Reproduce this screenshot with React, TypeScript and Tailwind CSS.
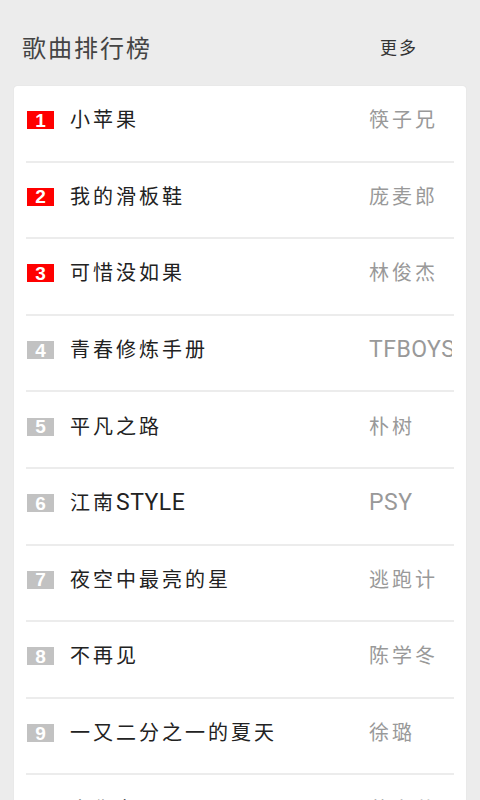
const songs = [
  { title: "小苹果", artist: "筷子兄" },
  { title: "我的滑板鞋", artist: "庞麦郎" },
  { title: "可惜没如果", artist: "林俊杰" },
  { title: "青春修炼手册", artist: "TFBOYS" },
  { title: "平凡之路", artist: "朴树" },
  { title: "江南STYLE", artist: "PSY" },
  { title: "夜空中最亮的星", artist: "逃跑计" },
  { title: "不再见", artist: "陈学冬" },
  { title: "一又二分之一的夏天", artist: "徐璐" },
  { title: "当你老了", artist: "莫文蔚" },
];

const font = { fontFamily: "Roboto, 'Noto Sans CJK SC', sans-serif" };

// latin runs get a plain font size and no letter spacing
const Mixed = ({ text }: { text: string }) => (
  <>
    {text.split(/([A-Za-z0-9]+)/).map((part, i) =>
      /^[A-Za-z0-9]+$/.test(part) ? (
        <span key={i} className="text-[23px] tracking-[0.5px]">
          {part}
        </span>
      ) : (
        <span key={i}>{part}</span>
      )
    )}
  </>
);

const App = () => {
  return (
    <div className="w-[480px] h-[800px] overflow-hidden bg-[#ececec]" style={font}>
      {/* header */}
      <div className="flex items-center justify-between h-[86px] pl-[22px] pr-[62px] pt-[12px]">
        <h1 className="text-[24px] tracking-[2px] text-[#444]">歌曲排行榜</h1>
        <span className="text-[17px] tracking-[2px] text-[#333]">更多</span>
      </div>

      {/* list card */}
      <div className="mx-[14px] bg-white rounded-[3px] shadow-[0_0_1px_rgba(0,0,0,0.15)]">
        <div className="mx-3">
          {songs.map((s, i) => (
            <div
              key={i}
              className="flex items-center h-[76.6px] pb-[6px] border-b-2 border-[#ececec]"
            >
              <span
                className={`ml-px w-[27px] h-[18px] flex items-center justify-center text-white text-[19px] font-bold leading-none ${
                  i < 3 ? "bg-[#ff0000]" : "bg-[#c2c2c2]"
                }`}
                style={{ fontFamily: "'Liberation Sans', Arial, sans-serif" }}
              >
                {i + 1}
              </span>
              <span className="ml-4 flex-1 text-[20px] tracking-[3px] text-[#222] whitespace-nowrap">
                <Mixed text={s.title} />
              </span>
              <span className="w-[83px] mr-[2px] overflow-hidden whitespace-nowrap text-[20px] tracking-[3px] text-[#999]">
                <Mixed text={s.artist} />
              </span>
            </div>
          ))}
        </div>
      </div>
    </div>
  );
};

export default App;
